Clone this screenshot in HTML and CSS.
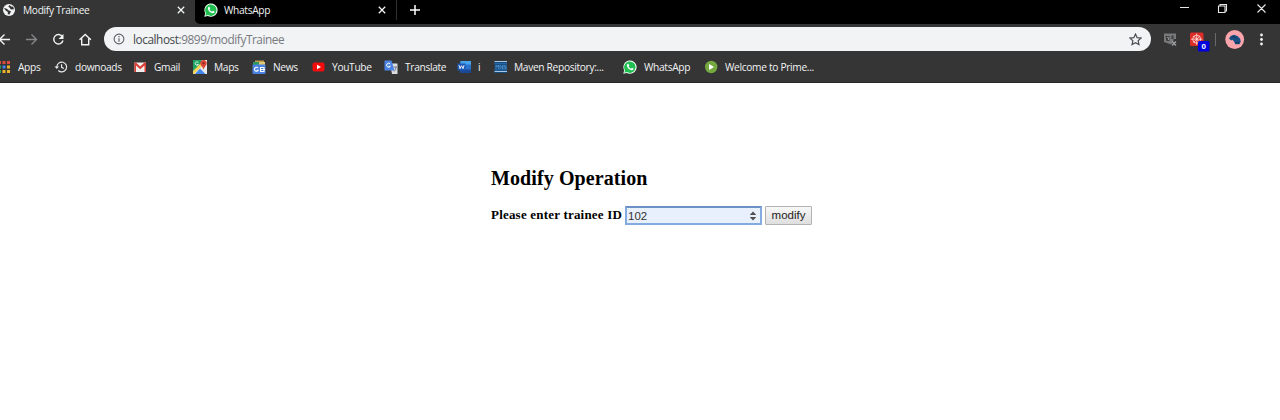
FILE: index.html
```
<!DOCTYPE html>
<html lang="en">
<head>
<meta charset="utf-8">
<title>Modify Trainee</title>
<link rel="stylesheet" href="styles.css">
</head>
<body>
<svg class="defs" width="0" height="0">
  <symbol id="close" viewBox="0 0 10 10"><path d="M1.800 1.800l6.400 6.400M8.200 1.800l-6.400 6.400" fill="none" stroke="#f1f3f4" stroke-width="1.300"/></symbol>
  <symbol id="whatsapp" viewBox="0 0 14 14">
    <path d="M.3 13.800L1.200 10.300A6.600 6.600 0 1 1 3.800 12.900Z" fill="#f4fff7"/>
    <path d="M1.400 12.700L2 10.200A5.700 5.700 0 1 1 4 12.100Z" fill="#1fbf50"/>
    <path d="M4.800 3.700c-1.900 1.300-.4 4.100 1.500 5.500 2 1.500 3.400 1.300 4.200.1.300-.7.100-.9-1.600-1.500l-.8.900C6.900 8.200 6 7.300 5.600 6.300l.6-.8c-.5-1.500-.7-1.900-1.400-1.800Z" fill="#fff"/>
  </symbol>
</svg>
<header class="browser">
  <div class="tabs">
    <div class="tab tab-active">
      <svg class="globe" viewBox="0 0 14 14"><circle cx="7" cy="7" r="6" fill="#f1f3f4"/><path d="M1.800 5l3 .8 2 1.700 2.200.8-1.500 3.300-1.800-.3.200-2.300-2-1.200ZM7.500 2l-1.200 1.800 1.500 1 1 1.700 3.200-.2-.8-2.500-2-.3Z" fill="#353535"/></svg>
      <span class="tab-title">Modify Trainee</span>
      <svg class="tab-close"><use href="#close"/></svg>
    </div>
    <div class="strip">
      <div class="tab tab-idle">
        <svg class="icon"><use href="#whatsapp"/></svg>
        <span class="tab-title">WhatsApp</span>
        <svg class="tab-close"><use href="#close"/></svg>
      </div>
      <svg class="new-tab" viewBox="0 0 12 12"><path d="M6 1v10M1 6h10" stroke="#fff" stroke-width="1.500"/></svg>
      <svg class="window-buttons" viewBox="0 0 90 20"><path d="M0 7.500h9M38.500 6h6.500v6.500H38.500ZM40 5.500V4.500H46.500V11H45.500M77.500 4.500l8 8M85.500 4.500l-8 8" fill="none" stroke="#e8e8e8" stroke-width="1.100"/></svg>
    </div>
  </div>
  <div class="toolbar">
    <svg class="nav" viewBox="0 0 104 30">
      <g fill="none" stroke="#f1f3f4" stroke-width="1.400">
        <path d="M10 15.500H0M4.500 10.500l-5 5 5 5"/>
        <path d="M26 15.500h10M31.500 10.500l5 5-5 5" stroke="#85878a"/>
        <path d="M62.300 12.500A4.700 4.700 0 1 0 63 16.500"/>
        <path d="M79.500 15.800l5.700-5.300 5.700 5.300M81.700 14.500v6.200h7v-6.200"/>
      </g>
      <path d="M63.500 10v5h-5Z" fill="#f1f3f4"/>
    </svg>
    <div class="address">
      <svg class="info" viewBox="0 0 12 12"><circle cx="6" cy="6" r="4.900" fill="none" stroke="#5f6368" stroke-width="1.100"/><path d="M6 5.200v3.500M6 3v1.200" stroke="#5f6368" stroke-width="1.200"/></svg>
      <span class="url"><span class="host">localhost</span>:9899/modifyTrainee</span>
      <svg class="star" viewBox="0 0 12 12"><path d="M6 1l1.500 3.300 3.600.4-2.700 2.400.8 3.600L6 8.900l-3.200 1.800.8-3.600L.9 4.700l3.600-.4Z" fill="none" stroke="#4b4e52" stroke-width="1.100"/></svg>
    </div>
    <svg class="extensions" viewBox="0 0 129 30">
      <path d="M13 9.500h12v5.500h-2.500v2.500L20 20.500 13 18Z" fill="#77797b"/>
      <path d="M14.500 12h4v5h-3ZM20.500 11.500h2v3.500h-2" fill="#3e3e3e"/>
      <path d="M16 13.500h1.500V16" fill="none" stroke="#929395"/>
      <path d="M21 17.500l4 4M25 17.500l-4 4" stroke="#a4a5a7" stroke-width="1.200"/>
      <rect x="39" y="8.500" width="13.500" height="13.500" rx="1.500" fill="#dc2d27"/>
      <g fill="none" stroke="#ffe1df" stroke-width=".8"><circle cx="45.700" cy="15.200" r="4"/><path d="M45.700 9.500v11.400M40 15.200h11.400M42.500 12l6.400 6.400M48.900 12l-6.400 6.400"/></g>
      <rect x="47" y="17" width="11.500" height="10.500" rx="1.500" fill="#0000dc"/>
      <text x="52.700" y="25.300" text-anchor="middle" class="badge">0</text>
      <path d="M64.500 9v13" stroke="#67696c"/>
      <circle cx="83.700" cy="15.500" r="9.400" fill="#faa4ac"/>
      <path d="M78 14.500l1.800-2.500 3.200-1.300 3.500 1.300 2.700 2.800.5 3.200-1.300 2.300h-4.200l-1-2.500-1.800-2-1.400.7Z" fill="#174f83"/>
      <path d="M80.500 13l2.500-.5 2 2M84.500 18.500l3.500.5" stroke="#102c4e" fill="none"/>
      <g fill="#f1f3f4"><circle cx="110.500" cy="11" r="1.400"/><circle cx="110.500" cy="15.500" r="1.400"/><circle cx="110.500" cy="20" r="1.400"/></g>
    </svg>
  </div>
  <nav class="bookmarks">
    <div class="bookmark"><svg class="icon" viewBox="0 0 14 14"><path d="M1 1h3v3H1zM5.500 1h3v3h-3zM10 1h3v3h-3z" fill="#dd4b3e"/><path d="M1 5.500h3v3H1z" fill="#28a35c"/><path d="M5.500 5.500h3v3h-3z" fill="#4285f4"/><path d="M10 5.500h3v3h-3zM10 10h3v3h-3zM5.500 10h3v3h-3z" fill="#edb52d"/><path d="M1 10h3v3H1z" fill="#28a35c"/></svg><span>Apps</span></div>
    <div class="bookmark"><svg class="icon" viewBox="0 0 14 14"><path d="M2.800 7a4.900 4.900 0 1 1 1.500 3.500M7.600 4.300v3l2.200 1.300" fill="none" stroke="#e8eaed" stroke-width="1.200"/><path d="M.5 6.500h4.600L2.800 9Z" fill="#e8eaed"/></svg><span>downoads</span></div>
    <div class="bookmark"><svg class="icon" viewBox="0 0 14 14"><path d="M1.500 2.500h11.500v9.500H1.500z" fill="#f2eeee"/><path d="M1.500 12V2.500h1.500L7.200 6.500l4.300-4H13V12h-1.500V5.500l-4.300 3.700L3 5.500V12Z" fill="#d93f35"/></svg><span>Gmail</span></div>
    <div class="bookmark"><svg class="icon" viewBox="0 0 14 14"><path d="M0 0h14v14H0z" fill="#e9eaea"/><path d="M0 0h9L6 8l-6 6Z" fill="#20a464"/><path d="M0 11l8-8 2 2-9 9H0Z" fill="#f6d357"/><path d="M2 14l5-5.500L12.500 14Z" fill="#4386ed"/><path d="M10.500 0c2 0 3.300 1.300 3.300 3.200 0 2.200-2.300 3.200-3.300 6.200-1-3-3.300-4-3.300-6.200C7.200 1.300 8.500 0 10.500 0Z" fill="#dd4639"/><circle cx="10.500" cy="3.300" r="1.100" fill="#7b2823"/><path d="M5.300 2.500a1.700 1.700 0 1 0 .1 2H4" fill="none" stroke="#fff" stroke-width=".8"/></svg><span>Maps</span></div>
    <div class="bookmark"><svg class="icon" viewBox="0 0 14 14"><path d="M3 .5h9v3H3z" fill="#bd9d46"/><path d="M1 2h9v4H1z" fill="#2f9661"/><path d="M7 2h6v4H7z" fill="#dfc678"/><rect x=".5" y="4.500" width="13" height="9.500" rx="1" fill="#4a83df"/><path d="M6 8a2 2 0 1 0 .2 2.300H4.500M8.500 7.500H12v4H8.500ZM8 9.500h5" fill="none" stroke="#fff" stroke-width="1.100"/></svg><span>News</span></div>
    <div class="bookmark"><svg class="icon" viewBox="0 0 14 14"><rect x="1.500" y="2.500" width="12" height="9" rx="2" fill="#f20d0d"/><path d="M6 4.800l4 2.200-4 2.200Z" fill="#fff"/></svg><span>YouTube</span></div>
    <div class="bookmark"><svg class="icon" viewBox="0 0 14 14"><path d="M6 3.500h7.500V14H8Z" fill="#d9dbde"/><path d="M.5.500H7.500l3 10H.5Z" fill="#4c84e4"/><path d="M6.200 4a2 2 0 1 0 .1 2.300H4.500" fill="none" stroke="#fff"/><path d="M9.500 7h3.500M12 7c-.2 2-.7 3-2 4.500" fill="none" stroke="#667080" stroke-width=".9"/></svg><span>Translate</span></div>
    <div class="bookmark"><svg class="icon" viewBox="0 0 14 14"><rect x="3.500" y="1" width="10.500" height="12" rx="1" fill="#2a72cc"/><path d="M3.500 1H14v3.500H3.500z" fill="#48a5ed"/><path d="M3.500 9.500H14V13H3.500z" fill="#1a4897"/><rect y="3.500" x=".5" width="8" height="7" fill="#1b58b5"/><path d="M2 5.200l1 3.500 1.500-3 1.500 3 1-3.500" fill="none" stroke="#fff" stroke-width=".9"/></svg><span>i</span></div>
    <div class="bookmark"><svg class="icon" viewBox="0 0 14 14"><path d="M1.500 1h12.500v12H1.500z" fill="#174979"/><path d="M1.500 1.500H14M1.500 11.500H14" stroke="#a6c8e6" stroke-width="1.100"/><path d="M1.500 3.700H14M1.500 9.800H14" stroke="#286eb1"/><path d="M3 9V5l1.200 2L5.500 5v4M7 9V5L9.500 9V5M11 9V5l2 4V5" fill="none" stroke="#4e91cf" stroke-width=".8"/></svg><span>Maven Repository:...</span></div>
    <div class="bookmark"><svg class="icon"><use href="#whatsapp"/></svg><span>WhatsApp</span></div>
    <div class="bookmark"><svg class="icon" viewBox="0 0 14 14"><circle cx="7.200" cy="7" r="6.200" fill="#75a83f"/><path d="M5 4L10 7 5 10Z" fill="#fff"/></svg><span>Welcome to Prime...</span></div>
  </nav>
</header>
<main class="page">
  <h1 class="heading">Modify Operation</h1>
  <form class="form">
    <label class="label" for="trainee">Please enter trainee ID</label>
    <div class="field">
      <input class="input" id="trainee" type="text" value="102">
      <svg class="spinner" viewBox="0 0 8 10"><path d="M.7 4L4 .5 7.300 4ZM.7 6L4 9.500 7.300 6Z" fill="#505050"/></svg>
    </div>
    <button class="button" type="button">modify</button>
  </form>
</main>
</body>
</html>
```
FILE: styles.css
```
* { box-sizing: border-box; }
body { margin: 0; height: 420px; overflow: hidden; background: #fff; }
svg { display: block; flex: none; }
.defs { position: absolute; }
.browser { height: 83px; background: #353535; border-bottom: 1px solid #292929; color: #f1f3f4; font-family: "Open Sans", "Noto Sans", sans-serif; font-size: 10.2px; letter-spacing: -.32px; overflow: hidden; }
.tabs { display: flex; height: 24px; }
.tab { display: flex; align-items: center; height: 20px; }
.tab-active { width: 195px; padding-left: 2px; }
.strip { display: flex; flex: 1; height: 24px; background: #000; border-bottom-left-radius: 5px; }
.tab-idle { width: 202px; padding-left: 9px; border-right: 1px solid #303030; }
.tab-title { flex: 1; padding-left: 7px; white-space: nowrap; }
.tab-idle .tab-title { padding-left: 6px; }
.globe { width: 14px; height: 14px; }
.icon { width: 14px; height: 14px; }
.tab-close { width: 10px; height: 10px; margin-right: 9px; }
.new-tab { width: 12px; height: 12px; margin: 4px 0 0 12px; }
.window-buttons { width: 90px; height: 20px; margin-left: auto; margin-right: 10px; }
.toolbar { display: flex; height: 30px; }
.nav { width: 104px; height: 30px; }
.address { display: flex; align-items: center; width: 1047px; height: 24px; margin-top: 3px; padding: 0 9px; border-radius: 12px; background: #f1f3f4; color: #777a7e; font-size: 11.8px; letter-spacing: -.43px; }
.info { width: 12px; height: 12px; }
.url { flex: 1; padding-left: 8px; }
.host { color: #44474b; }
.star { width: 13px; height: 13px; }
.extensions { width: 129px; height: 30px; }
.badge { fill: #fff; font: bold 8px "Liberation Sans", sans-serif; letter-spacing: 0; }
.bookmarks { display: grid; grid-template-columns: 57px 79px 60px 59px 59px 73px 73px 36px 130px 81px 120px; margin-left: -3px; height: 25px; }
.bookmark { display: flex; align-items: center; gap: 7px; white-space: nowrap; }
.page { padding: 83px 0 0 491px; color: #000; font-family: "Liberation Serif", serif; }
.heading { margin: 0; font-size: 20px; line-height: 24px; font-weight: bold; letter-spacing: .1px; }
.form { display: flex; align-items: center; margin-top: 16px; height: 19px; }
.label { width: 134px; padding-bottom: 1px; font-size: 13px; font-weight: bold; letter-spacing: .2px; white-space: nowrap; }
.field { display: flex; align-items: center; width: 137px; height: 19px; padding-right: 3px; border: 2px solid #84abdf; border-top-color: #6c91c7; background: #e8f0fe; }
.input { flex: 1; min-width: 0; padding: 0 0 0 1px; border: 0; outline: 0; background: transparent; color: #333; font: 11.5px "Liberation Sans", sans-serif; }
.spinner { width: 8px; height: 10px; }
.button { width: 47px; height: 19px; margin-left: 3px; padding: 0 0 1px; border: 1px solid #b2b2b2; border-radius: 1px; background: linear-gradient(#f8f8f8, #dedede); color: #222; font: 11.5px "Liberation Sans", sans-serif; }
```
